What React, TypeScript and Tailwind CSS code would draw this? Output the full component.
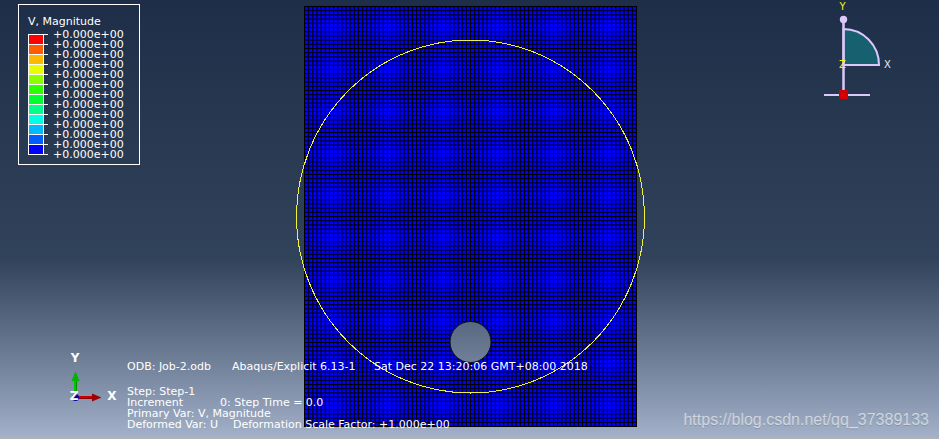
const legendColors = [
  'bg-[#ff0000]',
  'bg-[#ff5d00]',
  'bg-[#ffb900]',
  'bg-[#e8ff00]',
  'bg-[#8bff00]',
  'bg-[#2eff00]',
  'bg-[#00ff2e]',
  'bg-[#00ff8b]',
  'bg-[#00ffe8]',
  'bg-[#00b9ff]',
  'bg-[#005dff]',
  'bg-[#0000ff]',
];

const legendValues = Array.from({ length: 13 }, () => '+0.000e+00');

const COLS = 80;
const ROWS = 100;
const MESH_W = 332;
const MESH_H = 420;

function Legend() {
  return (
    <section className="absolute left-[18px] top-1 w-[122px] border border-white pt-[11px] pb-1 pl-[9px]">
      <h2 className="text-[11px] leading-3">V, Magnitude</h2>
      <div className="flex">
        <div className="mt-[6px] w-5">
          {legendColors.map((color) => (
            <div key={color} className="h-[10px] border-t border-white">
              <div className={`h-[9px] w-4 border-x border-white ${color}`} />
            </div>
          ))}
          <div className="border-t border-white" />
        </div>
        <ul className="ml-[5px] pt-0.5">
          {legendValues.map((value, i) => (
            <li key={i} className="text-[11px] leading-[10px]">
              {value}
            </li>
          ))}
        </ul>
      </div>
    </section>
  );
}

function Mesh() {
  return (
    <svg className="absolute left-1/2 top-0 -ml-[176px] h-[430px] w-[352px]" viewBox="294 0 352 430" aria-label="Mesh">
      <defs>
        <mask id="hole">
          <rect x="294" y="0" width="352" height="430" fill="white" />
          <circle cx="470.5" cy="342" r="20.5" fill="black" />
        </mask>
      </defs>
      <g mask="url(#hole)">
        <rect x="304.5" y="6.5" width={MESH_W} height={MESH_H} fill="#0000ff" />
        <g stroke="#000" strokeWidth="1">
          {Array.from({ length: COLS + 1 }, (_, i) => {
            const x = 304.5 + (i * MESH_W) / COLS;
            return <line key={i} x1={x} x2={x} y1="6" y2="427" />;
          })}
          {Array.from({ length: ROWS + 1 }, (_, i) => {
            const y = 6.5 + (i * MESH_H) / ROWS;
            return <line key={i} x1="304" x2="637" y1={y} y2={y} />;
          })}
        </g>
      </g>
      <circle cx="470.5" cy="342" r="20.5" fill="none" stroke="#101018" />
      <ellipse cx="470.5" cy="216.5" rx="174" ry="176.5" fill="none" stroke="#f0f03c" shapeRendering="crispEdges" />
    </svg>
  );
}

function ViewCompass() {
  return (
    <svg className="absolute right-[39px] top-0 h-[110px] w-[80px]" viewBox="820 0 80 110" aria-label="View compass">
      <path d="M843.5 29A35.5 36 0 0 1 879 65H843.5Z" fill="#166070" stroke="#dcc8fa" strokeWidth="2" />
      <path d="M843.5 20V95" stroke="#dcc8fa" strokeWidth="2.5" />
      <path d="M824 95H870" stroke="#dcc8fa" strokeWidth="2" />
      <circle cx="843.5" cy="19.5" r="3.7" fill="#dcc8fa" />
      <rect x="839" y="90" width="9" height="9" fill="#cc0000" />
      <rect x="841" y="93" width="4" height="4" fill="#e00000" />
      <g className="font-['DejaVu_Sans'] text-[10px]" textAnchor="middle">
        <text x="842.5" y="10" fill="#f5f500">Y</text>
        <text x="842.5" y="68" fill="#f5f500">Z</text>
        <text x="887.5" y="68" fill="#e8e8f0">X</text>
      </g>
    </svg>
  );
}

function Triad() {
  return (
    <svg className="absolute left-[60px] top-[345px] h-[64px] w-[64px]" viewBox="60 345 64 64" aria-label="Axes">
      <path d="M75.5 397V380" stroke="#00c800" strokeWidth="3" />
      <path d="M76.5 397V380" stroke="#008c00" />
      <path d="M75.5 371L79.5 381H71.5Z" fill="#00b400" />
      <path d="M76 397.5H92" stroke="#c80000" strokeWidth="3" />
      <path d="M76 398.5H92" stroke="#8c0000" />
      <path d="M101.5 397.5L92 393.5V401.5Z" fill="#a00000" />
      <circle cx="75.5" cy="397.5" r="3.5" fill="#0000b4" />
      <g className="font-['DejaVu_Sans'] text-[12px] font-bold" fill="white" textAnchor="middle">
        <text x="75" y="362">Y</text>
        <text x="74" y="400">Z</text>
        <text x="112" y="400">X</text>
      </g>
    </svg>
  );
}

function StateBlock() {
  return (
    <section className="absolute left-[127px] top-[361px] text-[11px] leading-[11px] whitespace-pre">
      <p className="flex">
        <span className="w-[105px]">ODB: Job-2.odb</span>
        <span className="w-[142px]">Abaqus/Explicit 6.13-1</span>
        <span>Sat Dec 22 13:20:06 GMT+08:00 2018</span>
      </p>
      <p className="mt-[14px]">Step: Step-1</p>
      <p className="flex">
        <span className="w-[93px]">Increment</span>
        <span>0: Step Time = 0.0</span>
      </p>
      <p>Primary Var: V, Magnitude</p>
      <p className="flex">
        <span className="w-[106px]">Deformed Var: U</span>
        <span>Deformation Scale Factor: +1.000e+00</span>
      </p>
    </section>
  );
}

export default function App() {
  return (
    <main className="relative h-screen min-h-[439px] w-full overflow-hidden border-b border-[#b4b4b4] bg-linear-to-b from-[#1e2e48] from-0% via-[#31435a] via-59% to-[#a3b1c9] to-100% font-['DejaVu_Sans',sans-serif] text-white">
      <Mesh />
      <Legend />
      <ViewCompass />
      <Triad />
      <StateBlock />
      <a
        href="https://blog.csdn.net/qq_37389133"
        className="absolute right-[10px] bottom-2 font-['Liberation_Sans',sans-serif] text-base leading-5 text-white/60 text-shadow-2xs"
      >
        https://blog.csdn.net/qq_37389133
      </a>
    </main>
  );
}
